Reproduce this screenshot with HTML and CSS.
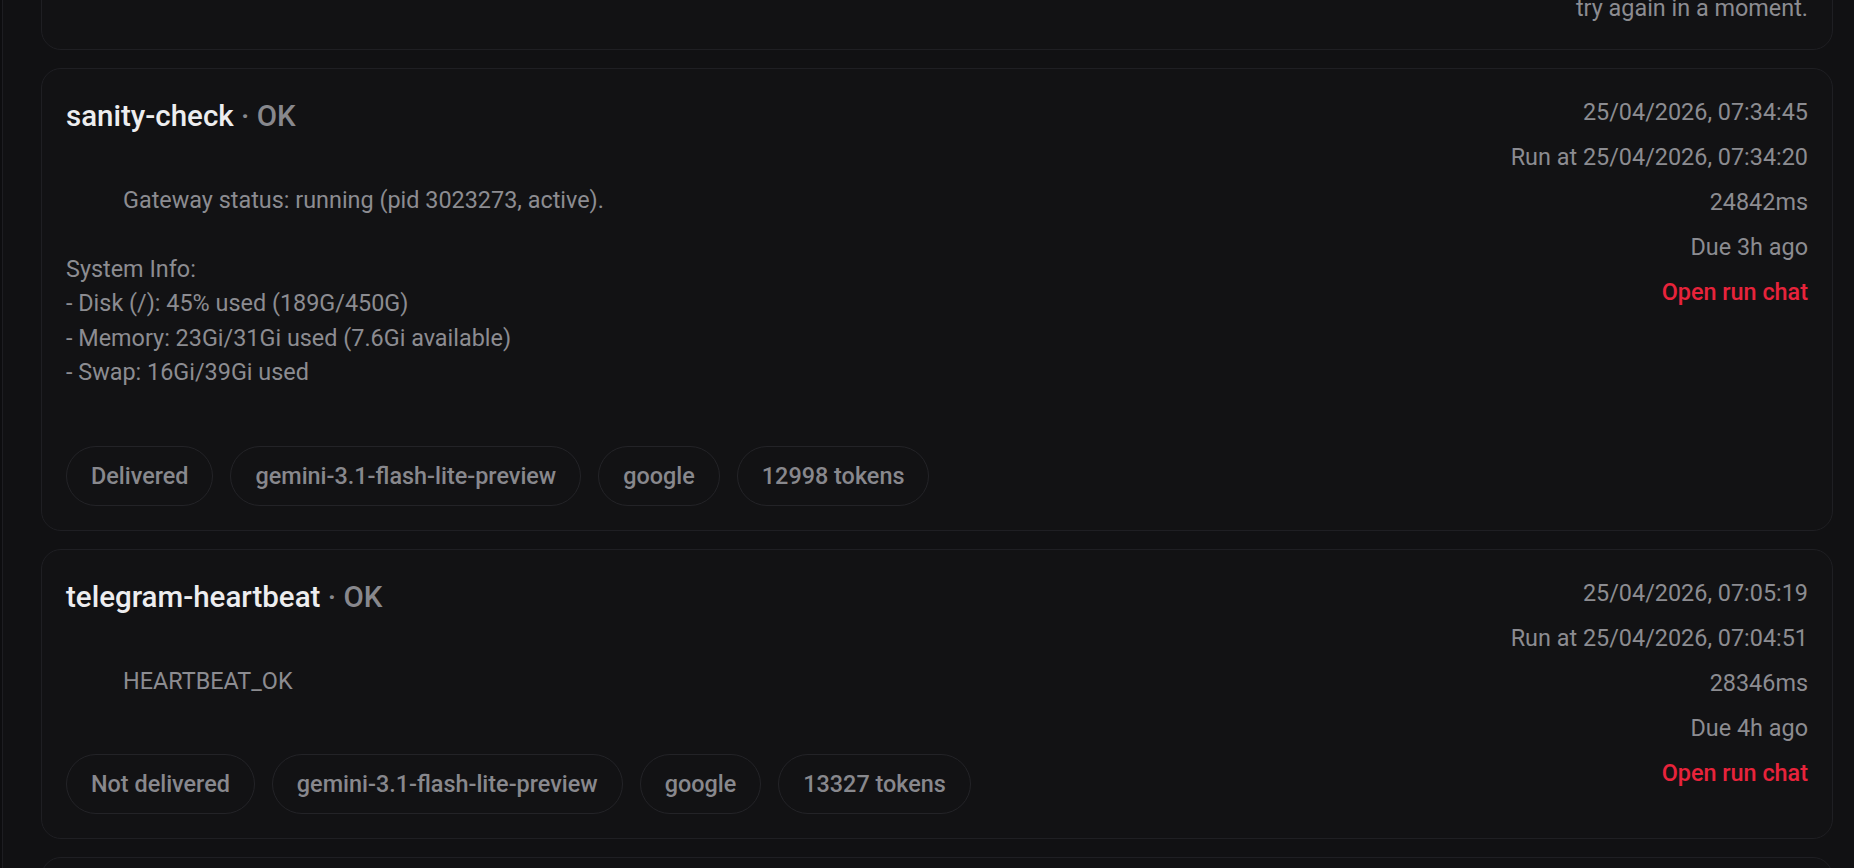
FILE: index.html
```html
<!DOCTYPE html>
<html>
<head>
    <title>Cron Runs</title>
    <link rel="stylesheet" href="styles.css">
</head>
<body>
    <div class="app">
        <main class="runs">
            <div class="run-list">
                <section class="run-card">
                    <div class="run-main">
                        <h2 class="run-title">memory-compaction <span class="run-status">· error</span></h2>
                    </div>
                    <div class="run-meta">
                        <span>25/04/2026, 08:02:11</span>
                        <span>Run at 25/04/2026, 08:01:58</span>
                        <span>Provider overloaded, please</span>
                        <span>try again in a moment.</span>
                    </div>
                </section>

                <section class="run-card">
                    <div class="run-main">
                        <h2 class="run-title">sanity-check <span class="run-status">· OK</span></h2>
                        <div class="run-output">
                            <p class="output-lead">Gateway status: running (pid 3023273, active).</p>
                            <p>System Info:<br>- Disk (/): 45% used (189G/450G)<br>- Memory: 23Gi/31Gi used (7.6Gi available)<br>- Swap: 16Gi/39Gi used</p>
                        </div>
                        <div class="chips">
                            <span class="chip">Delivered</span>
                            <span class="chip">gemini-3.1-flash-lite-preview</span>
                            <span class="chip">google</span>
                            <span class="chip">12998 tokens</span>
                        </div>
                    </div>
                    <div class="run-meta">
                        <span>25/04/2026, 07:34:45</span>
                        <span>Run at 25/04/2026, 07:34:20</span>
                        <span>24842ms</span>
                        <span>Due 3h ago</span>
                        <a href="#" class="run-link">Open run chat</a>
                    </div>
                </section>

                <section class="run-card">
                    <div class="run-main">
                        <h2 class="run-title">telegram-heartbeat <span class="run-status">· OK</span></h2>
                        <div class="run-output">
                            <p class="output-lead">HEARTBEAT_OK</p>
                        </div>
                        <div class="chips">
                            <span class="chip">Not delivered</span>
                            <span class="chip">gemini-3.1-flash-lite-preview</span>
                            <span class="chip">google</span>
                            <span class="chip">13327 tokens</span>
                        </div>
                    </div>
                    <div class="run-meta">
                        <span>25/04/2026, 07:05:19</span>
                        <span>Run at 25/04/2026, 07:04:51</span>
                        <span>28346ms</span>
                        <span>Due 4h ago</span>
                        <a href="#" class="run-link">Open run chat</a>
                    </div>
                </section>

                <section class="run-card">
                    <div class="run-main">
                        <h2 class="run-title">inbox-triage <span class="run-status">· OK</span></h2>
                    </div>
                    <div class="run-meta">
                        <span>25/04/2026, 06:30:07</span>
                    </div>
                </section>
            </div>
        </main>
    </div>
</body>
</html>
```

FILE: styles.css
```css
body {
    font-family: Roboto, "Liberation Sans", sans-serif;
    background-color: #0d0d0f;
    margin: 0;
    padding: 0;
    height: 100vh;
    overflow: hidden;
}

.app {
    margin-left: 2px;
    border-left: 1px solid #1d1d21;
    background-color: #111113;
    height: 100vh;
    overflow: hidden;
}

.runs {
    padding: 0 21px 0 38px;
}

/* list is scrolled a little, first card only shows its bottom */
.run-list {
    display: flex;
    flex-direction: column;
    gap: 18px;
    margin-top: -171.5px;
}

.run-card {
    display: flex;
    align-items: flex-start;
    gap: 24px;
    background-color: #121214;
    border: 1px solid #1f1f23;
    border-radius: 20px;
    padding: 26px 24px 24px;
}

.run-main {
    flex: 1;
    min-width: 0;
}

.run-title {
    margin: 0;
    font-size: 29.5px;
    line-height: 42px;
    font-weight: 500;
    color: #ededef;
}

.run-status {
    color: #88888d;
}

.run-output {
    margin-top: 45.5px;
    margin-bottom: 55.5px;
    font-size: 23.4px;
    line-height: 34.6px;
    color: #8c8c91;
}

.run-output p {
    margin: 0;
}

.run-output p + p {
    margin-top: 34.6px;
}

.output-lead {
    padding-left: 57px;
}

.chips {
    display: flex;
    flex-wrap: wrap;
    gap: 17px;
}

.chip {
    padding: 12px 24px;
    border: 1px solid #232327;
    border-radius: 999px;
    font-size: 23.4px;
    line-height: 34.5px;
    font-weight: 500;
    color: #88888d;
}

.run-meta {
    display: flex;
    flex-direction: column;
    align-items: flex-end;
    gap: 10.5px;
    font-size: 23.4px;
    line-height: 34.5px;
    color: #8c8c91;
    text-align: right;
    white-space: nowrap;
}

.run-link {
    color: #e8233b;
    font-weight: 500;
    text-decoration: none;
}
```
